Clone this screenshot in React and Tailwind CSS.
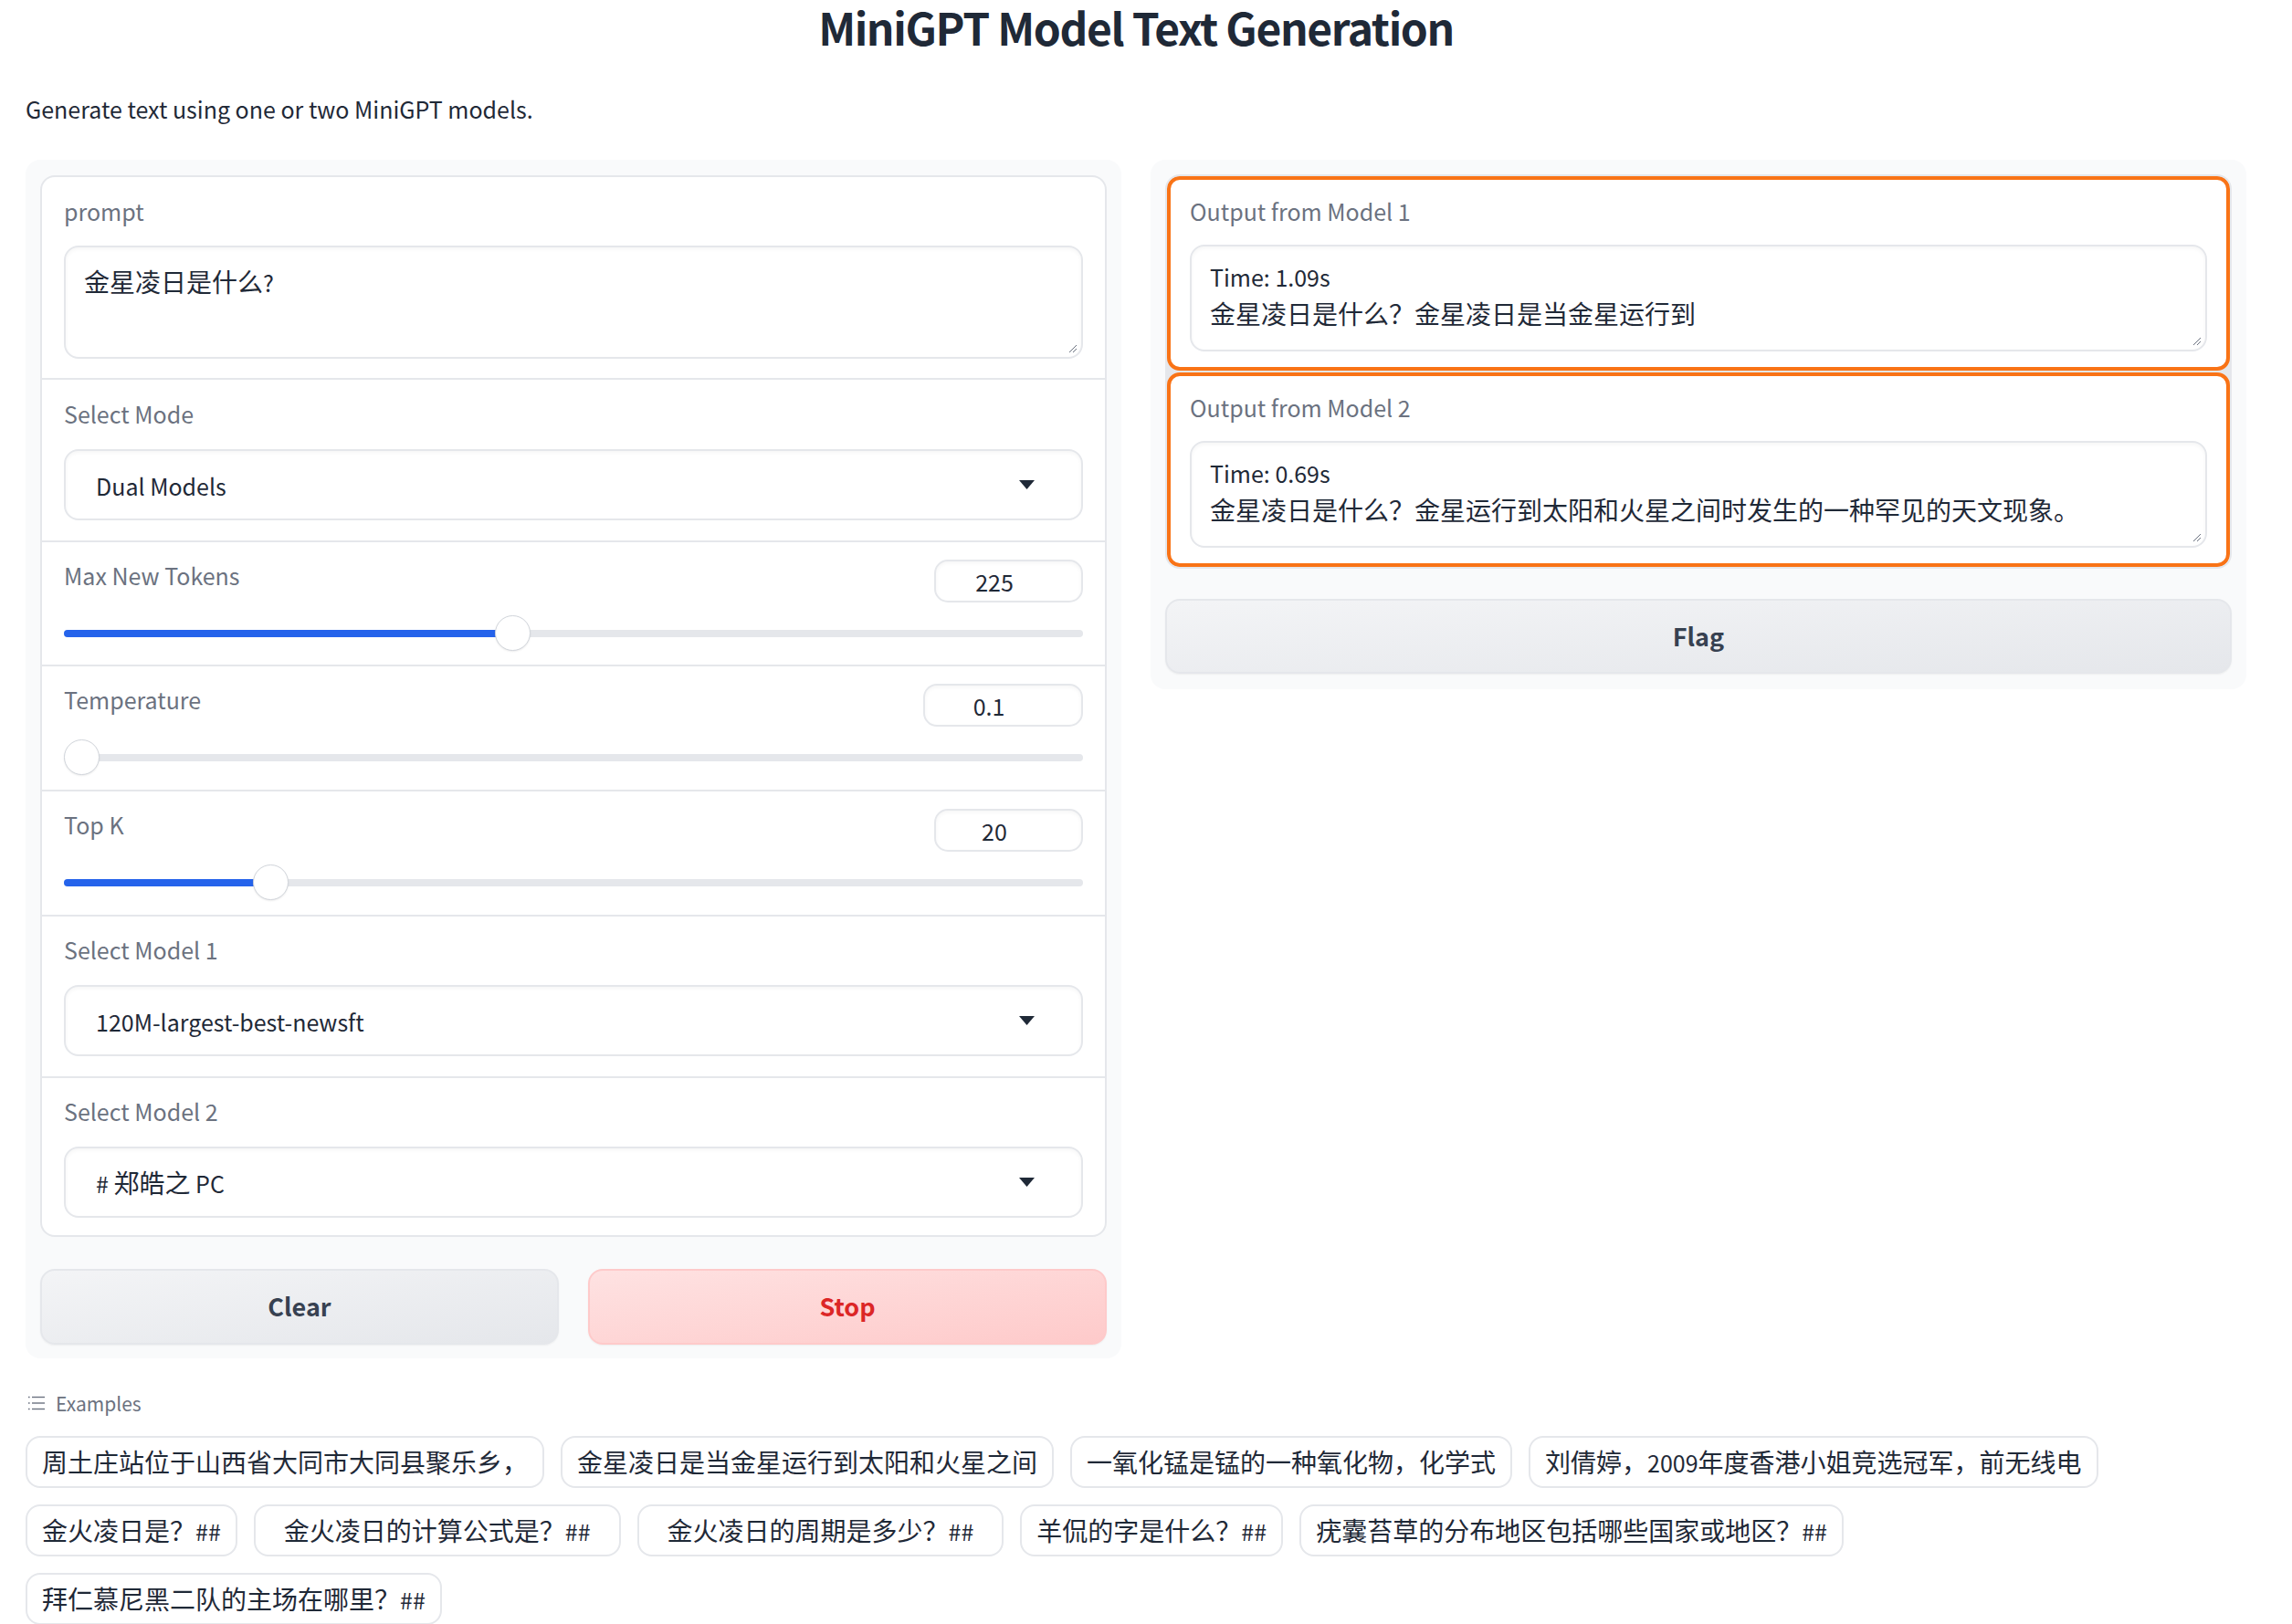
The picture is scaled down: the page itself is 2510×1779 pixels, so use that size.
const examples = [
    { text: '周土庄站位于山西省大同市大同县聚乐乡，' },
    { text: '金星凌日是当金星运行到太阳和火星之间' },
    { text: '一氧化锰是锰的一种氧化物，化学式' },
    { text: '刘倩婷，2009年度香港小姐竞选冠军，前无线电' },
    { text: '金火凌日是？##' },
    { text: '金火凌日的计算公式是？##', wide: true },
    { text: '金火凌日的周期是多少？##', wide: true },
    { text: '羊侃的字是什么？##' },
    { text: '疣囊苔草的分布地区包括哪些国家或地区？##' },
    { text: '拜仁慕尼黑二队的主场在哪里？##' }
];

// Latin runs are set a little smaller so they keep the width of the original sans
function Mixed({ text }) {
    const parts = text.split(/([\u0000-\u024f]+)/).filter(Boolean);
    return parts.map((part, i) =>
        /^[\u0000-\u024f]+$/.test(part) ? (
            <span key={i} className="text-[25px] leading-none">{part}</span>
        ) : (
            <span key={i}>{part}</span>
        )
    );
}

function Label({ children }) {
    return <div className="text-[25px] leading-[36px] text-[#6b7280]">{children}</div>;
}

function ResizeGrip() {
    return (
        <svg className="absolute right-[4px] bottom-[4px]" width="11" height="11" viewBox="0 0 11 11">
            <path d="M10 2 L2 10 M10 6 L6 10" stroke="#6b7280" strokeWidth="1" fill="none" />
        </svg>
    );
}

function Dropdown({ label, value, pad = 'pt-[18px] pb-[22px]' }) {
    return (
        <div className={`bg-white px-[24px] ${pad}`}>
            <Label>{label}</Label>
            <div className="mt-[21px] h-[78px] rounded-[16px] border-2 border-[#e5e7eb] shadow-[inset_0_2px_4px_rgba(0,0,0,0.04)] flex items-center justify-between pl-[33px] pr-[51px]">
                <span className="text-[28px] leading-[36px] text-[#1f2937]">
                    <Mixed text={value} />
                </span>
                <svg width="17" height="10" viewBox="0 0 17 10">
                    <path d="M0 0 H17 L8.5 10 Z" fill="#1f2937" />
                </svg>
            </div>
        </div>
    );
}

function Slider({ label, value, boxWidth, thumb, fill, pad = 'pt-[18px] pb-[15px]' }) {
    return (
        <div className={`bg-white px-[24px] ${pad}`}>
            <div className="flex justify-between items-start h-[48px]">
                <Label>{label}</Label>
                <div
                    className={`mt-[1px] h-[47px] rounded-[15px] border-2 border-[#e5e7eb] shadow-[inset_0_2px_4px_rgba(0,0,0,0.04)] flex items-center justify-center pr-[31px] text-[25px] leading-[36px] text-[#1f2937] ${boxWidth}`}
                >
                    {value}
                </div>
            </div>
            <div className="mt-[14px] relative h-[40px]">
                <div className="absolute left-0 right-0 top-[16px] h-[8px] rounded-full bg-[#e5e7eb]" />
                <div className="absolute left-0 top-[16px] h-[8px] rounded-full bg-[#2563eb]" style={{ width: fill }} />
                <div
                    className="absolute top-0 w-[39px] h-[39px] rounded-full bg-white border border-[#d1d5db] shadow-[0_1px_2px_rgba(0,0,0,0.08)]"
                    style={{ left: thumb }}
                />
            </div>
        </div>
    );
}

function OutputBox({ label, time, text }) {
    return (
        <div className="bg-white border-[4px] border-[#f97316] rounded-[14px] px-[21px] pt-[16px] pb-[17px]">
            <Label>{label}</Label>
            <div className="relative mt-[19px] h-[117px] rounded-[16px] border-2 border-[#e5e7eb] shadow-[inset_0_2px_4px_rgba(0,0,0,0.04)] px-[20px] pt-[13px] text-[28px] leading-[40px] text-[#1f2937]">
                <div className="text-[25px]">{time}</div>
                <div>
                    <Mixed text={text} />
                </div>
                <ResizeGrip />
            </div>
        </div>
    );
}

export default function App() {
    return (
        <div className="w-[2510px] min-h-[1779px] bg-white font-['Noto_Sans_CJK_SC',sans-serif] text-[#1f2937]">
            <div className="ml-[28px] w-[2432px]">
                <h1 className="pt-[3px] text-center text-[48px] leading-[52px] font-semibold tracking-[-1.4px] text-[#1f2937]">
                    MiniGPT Model Text Generation
                </h1>
                <p className="mt-[43px] text-[25px] leading-[42px] text-[#1f2937]">
                    Generate text using one or two MiniGPT models.
                </p>

                <div className="mt-[35px] grid grid-cols-2 gap-[32px] items-start">
                    {/* left column */}
                    <div className="bg-[#f9fafb] rounded-[16px] px-[16px] pt-[17px] pb-[15px]">
                        <div className="border-2 border-[#e5e7eb] rounded-[16px] bg-[#e5e7eb] flex flex-col gap-[2px] overflow-hidden">
                            <div className="bg-white px-[24px] pt-[19px] pb-[21px]">
                                <Label>prompt</Label>
                                <div className="relative mt-[20px] h-[124px] rounded-[16px] border-2 border-[#e5e7eb] shadow-[inset_0_2px_4px_rgba(0,0,0,0.04)] px-[20px] pt-[17px] text-[28px] leading-[40px] text-[#1f2937]">
                                    <Mixed text="金星凌日是什么?" />
                                    <ResizeGrip />
                                </div>
                            </div>
                            <Dropdown label="Select Mode" value="Dual Models" pad="pt-[19px] pb-[22px]" />
                            <Slider label="Max New Tokens" value="225" boxWidth="w-[163px]" thumb={472} fill={492} pad="pt-[18px] pb-[14px]" />
                            <Slider label="Temperature" value="0.1" boxWidth="w-[175px]" thumb={0} fill={0} />
                            <Slider label="Top K" value="20" boxWidth="w-[163px]" thumb={207} fill={226} />
                            <Dropdown label="Select Model 1" value="120M-largest-best-newsft" pad="pt-[18px] pb-[22px]" />
                            <Dropdown label="Select Model 2" value="# 郑皓之 PC" pad="pt-[18px] pb-[19px]" />
                        </div>
                        <div className="mt-[35px] grid grid-cols-2 gap-[32px]">
                            <button className="h-[83px] rounded-[16px] border-2 border-[#e5e7eb] bg-gradient-to-br from-[#f3f4f6] to-[#e5e7eb] shadow-[0_1px_2px_rgba(0,0,0,0.05)] text-[27px] font-semibold text-[#374151]">
                                Clear
                            </button>
                            <button className="h-[83px] rounded-[16px] border-2 border-[#fecaca] bg-gradient-to-br from-[#fee2e2] to-[#fecaca] shadow-[0_1px_2px_rgba(0,0,0,0.05)] text-[27px] font-semibold text-[#dc2626]">
                                Stop
                            </button>
                        </div>
                    </div>

                    {/* right column */}
                    <div className="bg-[#f9fafb] rounded-[16px] px-[16px] pt-[16px] pb-[17px]">
                        <div className="border-2 border-[#e5e7eb] rounded-[16px] bg-[#e5e7eb] flex flex-col gap-[2px] overflow-hidden">
                            <OutputBox
                                label="Output from Model 1"
                                time="Time: 1.09s"
                                text="金星凌日是什么？金星凌日是当金星运行到"
                            />
                            <OutputBox
                                label="Output from Model 2"
                                time="Time: 0.69s"
                                text="金星凌日是什么？金星运行到太阳和火星之间时发生的一种罕见的天文现象。"
                            />
                        </div>
                        <button className="mt-[33px] w-full h-[82px] rounded-[16px] border-2 border-[#e5e7eb] bg-gradient-to-br from-[#f3f4f6] to-[#e5e7eb] shadow-[0_1px_2px_rgba(0,0,0,0.05)] text-[27px] font-semibold text-[#374151]">
                            Flag
                        </button>
                    </div>
                </div>

                {/* examples */}
                <div className="mt-[33px] flex items-center gap-[12px] text-[21px] leading-[32px] text-[#6b7280]">
                    <svg className="ml-[3px]" width="18" height="16" viewBox="0 0 18 16">
                        <g stroke="#6b7280" strokeWidth="1.4">
                            <line x1="0" y1="1.5" x2="1.6" y2="1.5" />
                            <line x1="4" y1="1.5" x2="18" y2="1.5" />
                            <line x1="0" y1="8" x2="1.6" y2="8" />
                            <line x1="4" y1="8" x2="18" y2="8" />
                            <line x1="0" y1="14.5" x2="1.6" y2="14.5" />
                            <line x1="4" y1="14.5" x2="18" y2="14.5" />
                        </g>
                    </svg>
                    <span>Examples</span>
                </div>
                <div className="mt-[20px] flex flex-wrap gap-[18px]">
                    {examples.map((ex, index) => (
                        <button
                            key={index}
                            className={`h-[57px] rounded-[16px] border-2 border-[#e5e7eb] bg-white text-[28px] leading-[53px] text-[#1f2937] whitespace-nowrap ${
                                ex.wide ? 'px-[31px]' : 'px-[16px]'
                            }`}
                        >
                            <Mixed text={ex.text} />
                        </button>
                    ))}
                </div>
            </div>
        </div>
    );
}
